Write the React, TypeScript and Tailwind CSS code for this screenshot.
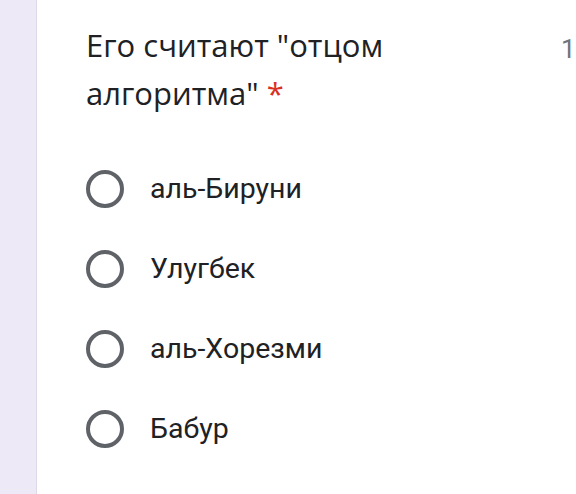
const options = ['аль-Бируни', 'Улугбек', 'аль-Хорезми', 'Бабур']

const Radio = () => (
  <span className="block w-[38px] h-[38px] rounded-full border-[4px] border-[#5f6368] shrink-0" />
)

export default function App() {
  return (
    <div className="flex w-[576px] h-[494px] overflow-hidden bg-white">
      <div className="w-[37px] shrink-0 bg-[#ede9f7] border-r border-[#ddd8ea]" />
      <div className="flex-1 pl-[49px] pt-[21px]">
        <div className="flex items-start whitespace-nowrap">
          <h2 className="w-[440px] shrink-0 whitespace-normal text-[31px] leading-[48px] text-[#202124] font-['Open_Sans',sans-serif]">
            Его считают "отцом алгоритма" <span className="text-[#d93025]">*</span>
          </h2>
          <span className="ml-[35px] mt-[9px] text-[26px] text-[#70757a] font-['Roboto',sans-serif]">
            1
          </span>
        </div>
        <div className="mt-[32px] flex flex-col">
          {options.map(o => (
            <label key={o} className="flex items-center h-[80px]">
              <Radio />
              <span className="ml-[26px] text-[28.5px] text-[#202124] font-['Roboto',sans-serif]">{o}</span>
            </label>
          ))}
        </div>
      </div>
    </div>
  )
}
